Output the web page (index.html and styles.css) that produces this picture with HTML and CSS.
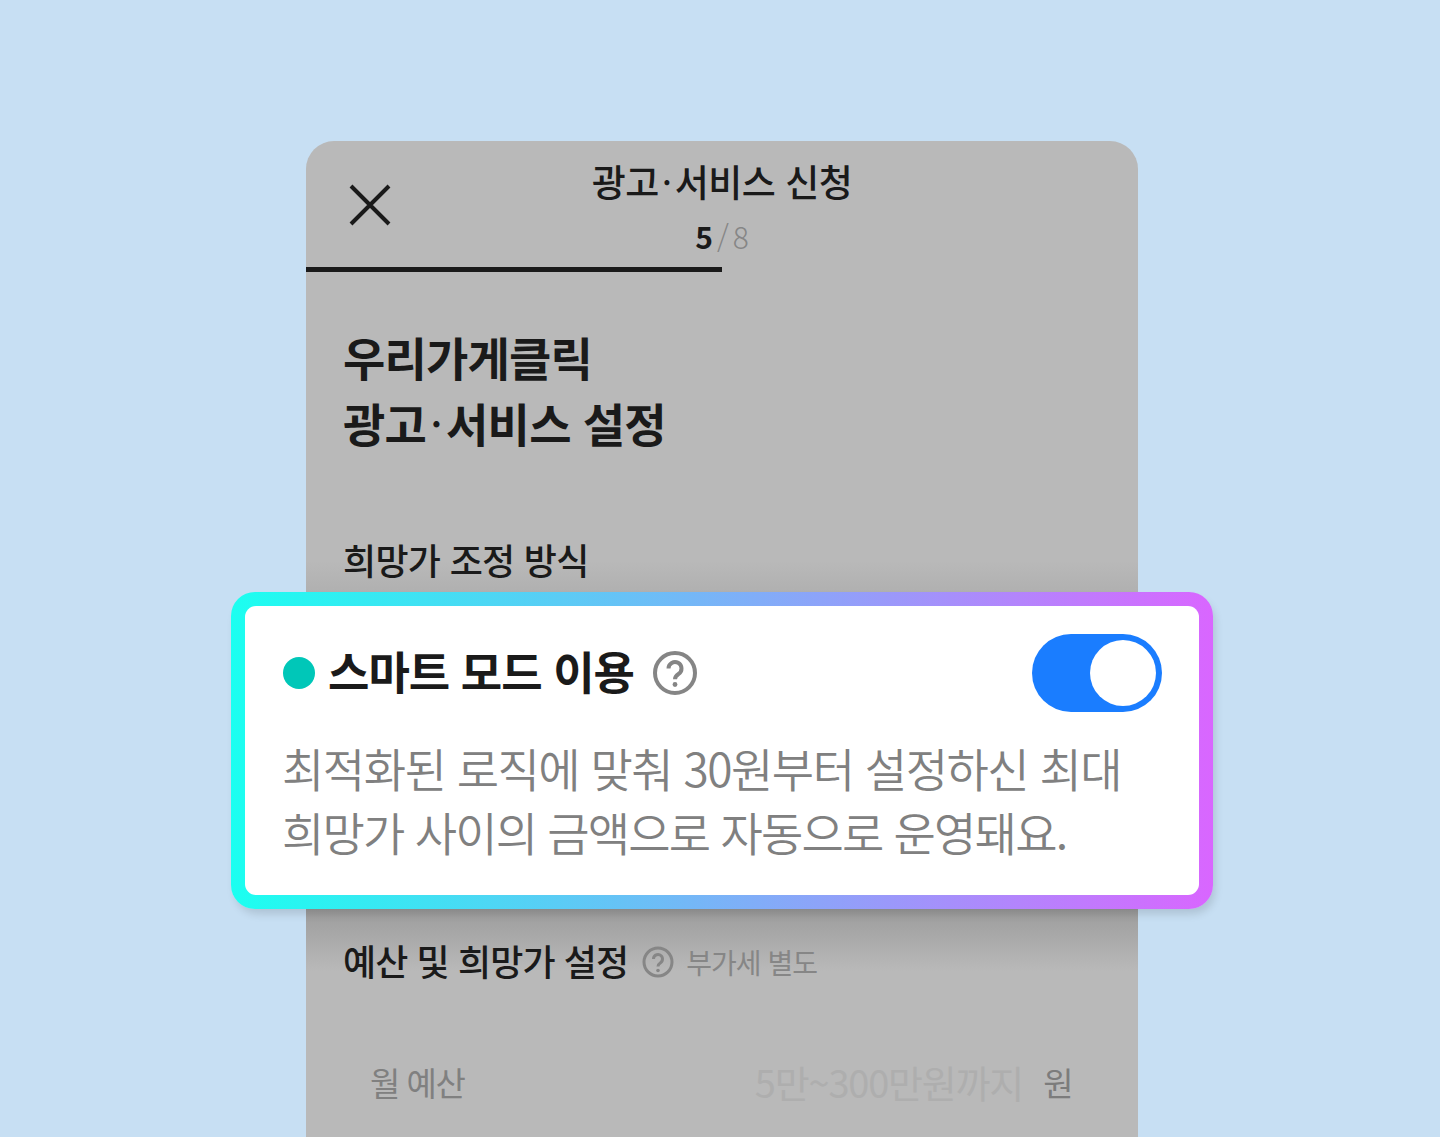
FILE: index.html
```html
<!DOCTYPE html>
<html lang="ko">
<head>
    <meta charset="UTF-8">
    <meta name="viewport" content="width=device-width, initial-scale=1.0">
    <title>스마트 모드 이용</title>
    <link rel="stylesheet" href="styles.css">
</head>
<body>

    <div class="stage">
        <div class="sheet">
            <div class="sheet-head">
                <svg class="close-icon" width="44" height="44" viewBox="0 0 44 44">
                    <path d="M3 3 L41 41 M41 3 L3 41" fill="none" stroke="#1a1a1a" stroke-width="4"/>
                </svg>
                <div class="sheet-title">광고<span class="mid-dot">·</span>서비스 신청</div>
                <div class="sheet-step"><b>5</b><span class="step-rest"><span class="step-slash">/</span>8</span></div>
            </div>
            <div class="progress"><div class="progress-fill"></div></div>

            <h1 class="sheet-heading">우리가게클릭<br>광고<span class="mid-dot">·</span>서비스 설정</h1>
            <h2 class="section-label">희망가 조정 방식</h2>

            <div class="budget-head">
                <h2 class="section-label">예산 및 희망가 설정</h2>
                <svg class="help-small" width="32" height="32" viewBox="0 0 32 32">
                    <circle cx="16" cy="16" r="14" fill="none" stroke="#868686" stroke-width="3"/>
                    <path d="M11.5 13 a4.5 4.5 0 1 1 7 3.7 c-1.6 1.1 -2.5 1.9 -2.5 3.8" fill="none" stroke="#868686" stroke-width="3"/>
                    <circle cx="16" cy="24.5" r="1.8" fill="#868686"/>
                </svg>
                <span class="vat-note">부가세 별도</span>
            </div>

            <div class="budget-row">
                <span class="budget-label">월 예산</span>
                <span class="budget-placeholder">5만~300만원까지</span>
                <span class="budget-unit">원</span>
            </div>
        </div>

        <div class="popout">
            <div class="popout-inner">
                <div class="popout-head">
                    <span class="dot"></span>
                    <span class="popout-title">스마트 모드 이용</span>
                    <svg class="help-big" width="44" height="44" viewBox="0 0 44 44">
                        <circle cx="22" cy="22" r="20" fill="none" stroke="#858585" stroke-width="4"/>
                        <path d="M15.5 17.5 a6.5 6.5 0 1 1 10 5.5 c-2.3 1.5 -3.5 2.6 -3.5 5.2" fill="none" stroke="#858585" stroke-width="4"/>
                        <circle cx="22" cy="33.5" r="2.4" fill="#858585"/>
                    </svg>
                    <span class="toggle"><span class="toggle-knob"></span></span>
                </div>
                <p class="popout-text">최적화된 로직에 맞춰 30원부터 설정하신 최대</p>
                <p class="popout-text popout-text-tight">희망가 사이의 금액으로 자동으로 운영돼요.</p>
            </div>
        </div>
    </div>

</body>
</html>
```

FILE: styles.css
```css
html, body {
    margin: 0;
    padding: 0;
}
body {
    font-family: "Noto Sans CJK KR", "Noto Sans", sans-serif;
    background-color: #c7dff3;
    color: #1a1a1a;
}
.stage {
    position: relative;
    height: 1137px;
    overflow: hidden;
    padding-top: 141px;
    box-sizing: border-box;
}
.sheet {
    width: 832px;
    height: 996px;
    margin-left: 306px;
    background: linear-gradient(180deg, #b9b9b9 420px, #b0b0b0 451px, #9c9c9c 768px, #b9b9b9 830px);
    border-radius: 28px 28px 0 0;
}
.sheet-head {
    position: relative;
    height: 126px;
    text-align: center;
}
.close-icon {
    position: absolute;
    left: 42px;
    top: 42px;
}
.sheet-title {
    padding-top: 12px;
    font-size: 37px;
    font-weight: 500;
    line-height: 56px;
    letter-spacing: -0.5px;
}
.mid-dot {
    margin: 0 3px;
    font-weight: 400;
}
.sheet-heading .mid-dot {
    margin: 0 4px;
}
.sheet-step {
    margin-top: 6px;
    font-size: 30px;
    line-height: 42px;
}
.step-rest {
    color: #868686;
    font-weight: 300;
}
.step-slash {
    margin: 0 4px;
}
.progress {
    height: 5px;
    margin-top: 0;
}
.progress-fill {
    width: 416px;
    height: 5px;
    background-color: #1a1a1a;
}
.sheet-heading {
    margin: 51px 0 0 37px;
    font-size: 46px;
    font-weight: 700;
    line-height: 66px;
    letter-spacing: -0.8px;
}
.section-label {
    margin: 0;
    font-size: 36px;
    font-weight: 500;
    line-height: 50px;
    letter-spacing: -0.7px;
}
.sheet-heading + .section-label {
    margin: 79px 0 0 37px;
}
.budget-head {
    display: flex;
    align-items: center;
    margin: 351px 0 0 37px;
}
.budget-head .section-label {
    letter-spacing: -0.9px;
}
.help-small {
    margin: 3px 0 0 14px;
}
.vat-note {
    margin: 3px 0 0 12px;
    font-size: 28px;
    color: #868686;
    letter-spacing: -1px;
}
.budget-row {
    display: flex;
    align-items: center;
    margin: 72px 66px 0 64px;
    font-size: 33px;
    line-height: 50px;
    letter-spacing: -1.5px;
}
.budget-label {
    flex: 1;
    color: #808080;
}
.budget-placeholder {
    font-size: 38px;
    color: #aeaeae;
    letter-spacing: -1.2px;
}
.budget-unit {
    margin-left: 20px;
    color: #7c7c7c;
}

/* highlighted card over the sheet */
.popout {
    position: absolute;
    left: 231px;
    top: 592px;
    width: 982px;
    height: 317px;
    box-sizing: border-box;
    padding: 14px;
    border-radius: 24px;
    background: linear-gradient(90deg, #1bfff0, #d966ff);
    box-shadow: 3px 6px 8px -1px rgba(0, 0, 0, 0.13);
}
.popout-inner {
    height: 100%;
    box-sizing: border-box;
    padding: 28px 37px 0 37px;
    background-color: #ffffff;
    border-radius: 11px;
}
.popout-head {
    display: flex;
    align-items: center;
    height: 78px;
    margin-bottom: 23px;
}
.dot {
    width: 32px;
    height: 32px;
    margin-left: 1px;
    border-radius: 50%;
    background-color: #00c7b8;
}
.popout-title {
    margin: 0 0 5px 13px;
    font-size: 45px;
    font-weight: 700;
    letter-spacing: -1px;
    color: #1a1a1a;
}
.help-big {
    margin-left: 19px;
}
.toggle {
    display: flex;
    align-items: center;
    justify-content: flex-end;
    width: 130px;
    height: 78px;
    box-sizing: border-box;
    padding-right: 6px;
    margin-left: auto;
    border-radius: 39px;
    background-color: #1a7dff;
}
.toggle-knob {
    width: 66px;
    height: 66px;
    border-radius: 50%;
    background-color: #ffffff;
}
.popout-text {
    margin: 0;
    font-size: 46px;
    font-weight: 350;
    line-height: 64px;
    letter-spacing: -1.5px;
    color: #808080;
    white-space: nowrap;
}
.popout-text-tight {
    letter-spacing: -1.8px;
}
```
